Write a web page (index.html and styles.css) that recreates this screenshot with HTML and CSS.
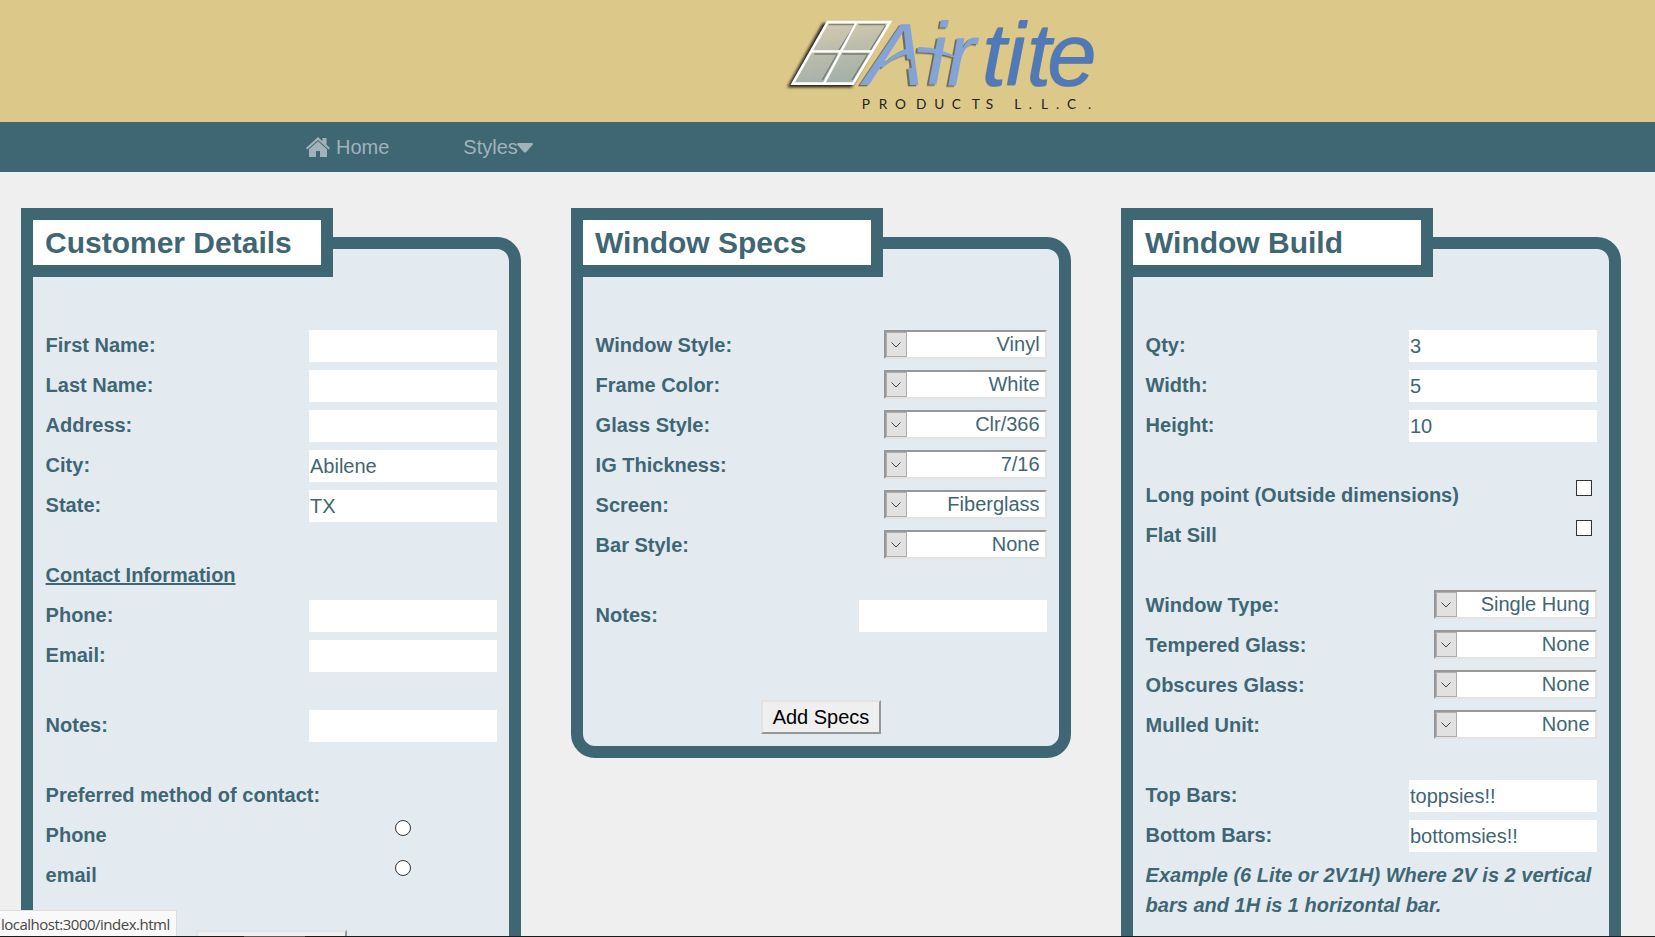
FILE: index.html
```html
<!DOCTYPE html>
<html lang="en">
<head>
<meta charset="utf-8">
<title>Airtite Products</title>
<link rel="stylesheet" href="styles.css">
</head>
<body>
<header class="banner">
  <svg class="logo" viewBox="0 0 1050 366" role="img" aria-label="Airtite Products L.L.C.">
    <defs>
      <linearGradient id="pane" x1="0" y1="0" x2="0.3" y2="1">
        <stop offset="0" stop-color="#d8ccb0"/><stop offset="1" stop-color="#a5b0a8"/>
      </linearGradient>
      <filter id="soft" x="-10%" y="-10%" width="120%" height="120%"><feGaussianBlur stdDeviation="4"/></filter>
      <clipPath id="barless"><path clip-rule="evenodd" d="M200 20H560V300H200ZM347 178H413.500L418.500 204H333Z"/></clipPath>
    </defs>
    <path d="M158 70L350 70L245 262L52 262Z" fill="#1c1912" filter="url(#soft)"/>
    <path d="M173 66L360 66L249 251L68 251Z" fill="url(#pane)"/>
    <g fill="none" stroke="#4d554f" stroke-width="4" opacity=".6">
      <path d="M176 74H254M266 74H346M133 162H202M216 162H295M253 77L207 150M347 77L301 150M200 165L157 240M292 165L246 240"/>
    </g>
    <path d="M173 66L360 66L249 251L68 251Z" fill="none" stroke="#fff" stroke-width="8"/>
    <path d="M260 66L162 250M124 154H306" fill="none" stroke="#fff" stroke-width="7"/>
    <g class="logo-air">
      <g transform="translate(283 254) skewX(-4) translate(-280 -254)"><text x="280" y="254" clip-path="url(#barless)">A</text></g>
      <text x="472 530" y="254">ir</text>
      <path d="M334 207Q362 160 414 144V162Q366 174 334 207Z"/>
      <path d="M444 141Q512 140 570 178Q510 157 442 157Z"/>
    </g>
    <text class="logo-tite" x="637 709 771 833" y="254">tite</text>
    <text class="logo-sub" x="275 326 375 438 493 545 605 647 700 733 776 813 858 891 954" y="327">PRODUCTS L.L.C.</text>
  </svg>
</header>
<nav class="nav">
  <a class="nav-link home">
    <svg class="house" viewBox="0 0 24 20"><path d="M12 0L16.5 4.2V1H20.500V7.800L24 11L22.700 12.400L12 2.900L1.300 12.400L0 11Z"/><path d="M12 4.300L21 12.200V20H14V14H10V20H3V12.200Z"/></svg>
    <span>Home</span>
  </a>
  <a class="nav-link"><span>Styles</span><svg class="caret" viewBox="0 0 16 10"><path d="M1 0H15Q16.500 .5 15.500 2L9.200 9Q8 10 6.800 9L.5 2Q-.5 .5 1 0Z"/></svg></a>
</nav>
<main class="panels">
  <section class="panel">
    <h2 class="panel-title">Customer Details</h2>
    <div class="row"><label>First Name:</label><input class="field"></div>
    <div class="row"><label>Last Name:</label><input class="field"></div>
    <div class="row"><label>Address:</label><input class="field"></div>
    <div class="row"><label>City:</label><input class="field" value="Abilene"></div>
    <div class="row"><label>State:</label><input class="field" value="TX"></div>
    <div class="row gap"><label class="underlined">Contact Information</label></div>
    <div class="row"><label>Phone:</label><input class="field"></div>
    <div class="row"><label>Email:</label><input class="field"></div>
    <div class="row gap"><label>Notes:</label><input class="field"></div>
    <div class="row gap"><label>Preferred method of contact:</label></div>
    <div class="row"><label>Phone</label><input class="radio" type="radio" name="contact"></div>
    <div class="row"><label>email</label><input class="radio" type="radio" name="contact"></div>
    <button class="button button-wide"></button>
  </section>
  <section class="panel">
    <h2 class="panel-title">Window Specs</h2>
    <div class="row"><label>Window Style:</label><div class="select"><span class="arrow"><svg viewBox="0 0 10 6"><path d="M.5 .5L5 5L9.500 .5"/></svg></span><span>Vinyl</span></div></div>
    <div class="row"><label>Frame Color:</label><div class="select"><span class="arrow"><svg viewBox="0 0 10 6"><path d="M.5 .5L5 5L9.500 .5"/></svg></span><span>White</span></div></div>
    <div class="row"><label>Glass Style:</label><div class="select"><span class="arrow"><svg viewBox="0 0 10 6"><path d="M.5 .5L5 5L9.500 .5"/></svg></span><span>Clr/366</span></div></div>
    <div class="row"><label>IG Thickness:</label><div class="select"><span class="arrow"><svg viewBox="0 0 10 6"><path d="M.5 .5L5 5L9.500 .5"/></svg></span><span>7/16</span></div></div>
    <div class="row"><label>Screen:</label><div class="select"><span class="arrow"><svg viewBox="0 0 10 6"><path d="M.5 .5L5 5L9.500 .5"/></svg></span><span>Fiberglass</span></div></div>
    <div class="row"><label>Bar Style:</label><div class="select"><span class="arrow"><svg viewBox="0 0 10 6"><path d="M.5 .5L5 5L9.500 .5"/></svg></span><span>None</span></div></div>
    <div class="row gap"><label>Notes:</label><input class="field"></div>
    <button class="button button-low">Add Specs</button>
  </section>
  <section class="panel">
    <h2 class="panel-title">Window Build</h2>
    <div class="row"><label>Qty:</label><input class="field" value="3"></div>
    <div class="row"><label>Width:</label><input class="field" value="5"></div>
    <div class="row"><label>Height:</label><input class="field" value="10"></div>
    <div class="row gap"><label>Long point (Outside dimensions)</label><input class="check" type="checkbox"></div>
    <div class="row"><label>Flat Sill</label><input class="check" type="checkbox"></div>
    <div class="row gap"><label>Window Type:</label><div class="select"><span class="arrow"><svg viewBox="0 0 10 6"><path d="M.5 .5L5 5L9.500 .5"/></svg></span><span>Single Hung</span></div></div>
    <div class="row"><label>Tempered Glass:</label><div class="select"><span class="arrow"><svg viewBox="0 0 10 6"><path d="M.5 .5L5 5L9.500 .5"/></svg></span><span>None</span></div></div>
    <div class="row"><label>Obscures Glass:</label><div class="select"><span class="arrow"><svg viewBox="0 0 10 6"><path d="M.5 .5L5 5L9.500 .5"/></svg></span><span>None</span></div></div>
    <div class="row"><label>Mulled Unit:</label><div class="select"><span class="arrow"><svg viewBox="0 0 10 6"><path d="M.5 .5L5 5L9.500 .5"/></svg></span><span>None</span></div></div>
    <div class="row gap"><label>Top Bars:</label><input class="field" value="toppsies!!"></div>
    <div class="row"><label>Bottom Bars:</label><input class="field" value="bottomsies!!"></div>
    <p class="example">Example (6 Lite or 2V1H) Where 2V is 2 vertical bars and 1H is 1 horizontal bar.</p>
  </section>
</main>
<div class="status">localhost:3000/index.html</div>
<div class="edge"><span class="edge-mark"></span></div>
</body>
</html>
```
FILE: styles.css
```css
* { box-sizing: border-box; }

body {
  margin: 0;
  height: 937px;
  overflow: hidden;
  background: #efefef;
  color: #3f6673;
  font: 20px/30px "Liberation Sans", Arial, sans-serif;
}

.banner { height: 122px; padding-left: 770px; background: #dcc888; }
.logo { display: block; width: 350px; height: 122px; }
.logo text { font-family: "Liberation Sans", Arial, sans-serif; font-style: italic; font-size: 265px; }
.logo-air { fill: #84a3d6; filter: drop-shadow(-6px 4px 1px #6f6b54); }
.logo .logo-tite { fill: #4f79b9; filter: drop-shadow(-2px 2px 1px #46628c); }
.logo .logo-sub { font: 400 41px Lato, sans-serif; fill: #222; }

.nav { display: flex; align-items: center; gap: 74px; height: 50px; padding-left: 306px; background: #3f6673; color: #a0b3ba; }
.nav-link { display: flex; align-items: center; }
.home { gap: 6px; }
.house { width: 24px; height: 20px; fill: currentColor; }
.caret { width: 16px; height: 10px; margin: 2px 0 0 -1px; fill: currentColor; }

.panels { display: flex; align-items: flex-start; gap: 50px; height: 765px; padding: 65px 0 0 21px; overflow: hidden; }
.panel {
  flex: none;
  width: 500px;
  padding: 0 12px 12px;
  border: 12px solid #3f6673;
  border-radius: 24px;
  background: #e3ebf1;
}
.panel-title {
  width: 312px;
  margin: -41px 0 53px -24px;
  padding-left: 12px;
  border: 12px solid #3f6673;
  background: #fff;
  font-size: 30px;
  line-height: 45px;
}

.row { display: flex; justify-content: space-between; align-items: flex-start; height: 30px; margin-bottom: 10px; padding-left: .6px; font-weight: bold; }
.gap { margin-top: 40px; }
.underlined { text-decoration: underline; text-decoration-thickness: 2px; }
.field { width: 188px; height: 32px; padding: 0 1px; border: 0; border-radius: 0; background: #fff; color: inherit; font: 20px "Liberation Sans", Arial, sans-serif; }
.radio, .check { appearance: none; width: 16px; height: 16px; border: 1px solid #333; background: #fff; }
.radio { margin: 0 86px 0 0; border-radius: 50%; }
.check { margin: 0 5px 0 0; }

.select {
  display: flex;
  justify-content: space-between;
  width: 163px;
  height: 29px;
  padding-right: 5.4px;
  border: 2px solid;
  border-color: #979797 #e3e3e3 #e3e3e3 #979797;
  background: #fff;
  font-weight: normal;
  line-height: 25px;
}
.arrow { display: flex; align-items: center; justify-content: center; width: 21px; padding-right: 1px; border: 1px solid #adadad; background: #e1e1e1; }
.arrow svg { width: 10px; height: 6px; fill: none; stroke: #444; }

.button {
  display: block;
  width: 120px;
  height: 34px;
  margin: 40px auto 0;
  padding: 0;
  border: 2px solid;
  border-color: #e3e3e3 #979797 #979797 #e3e3e3;
  background: #efefef;
  color: #000;
  font: 20px "Liberation Sans", Arial, sans-serif;
}
.button-low { margin-top: 70px; }
.button-wide { width: 151px; }
.example { margin: 0 0 40px; padding-left: .6px; font-weight: bold; font-style: italic; }

.status {
  position: fixed;
  left: 0;
  bottom: 1px;
  width: 177px;
  height: 26px;
  padding-left: 1px;
  border: solid #dedede;
  border-width: 1px 1px 0 0;
  background: #f9f9f9;
  color: #484848;
  font: 15px/26px "Open Sans", sans-serif;
  letter-spacing: -0.5px;
  white-space: nowrap;
}
.edge { position: fixed; left: 0; right: 0; bottom: 0; height: 1px; padding-left: 244px; background: #1b1b1b; }
.edge-mark { display: block; width: 61px; height: 1px; background: #5a5a5a; }
```
